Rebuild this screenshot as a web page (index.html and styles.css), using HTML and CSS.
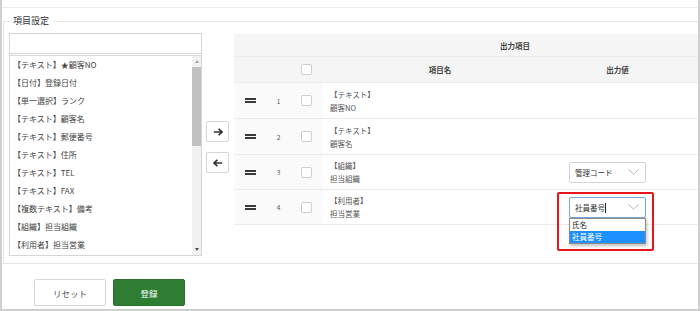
FILE: index.html
```html
<!DOCTYPE html>
<html lang="ja">
<head>
  <meta charset="UTF-8">
  <title>項目設定</title>
  <link rel="stylesheet" href="styles.css">
</head>
<body>
<div class="frame">
  <div class="topline"></div>

  <!-- 項目設定 -->
  <fieldset class="settings">
    <legend>項目設定</legend>
    <div class="panel">

      <!-- available fields -->
      <div class="picker">
        <input class="search" type="text">
        <div class="listbox">
          <ul class="items">
            <li>【テキスト】★顧客NO</li>
            <li>【日付】登録日付</li>
            <li>【単一選択】ランク</li>
            <li>【テキスト】顧客名</li>
            <li>【テキスト】郵便番号</li>
            <li>【テキスト】住所</li>
            <li>【テキスト】TEL</li>
            <li>【テキスト】FAX</li>
            <li>【複数テキスト】備考</li>
            <li>【組織】担当組織</li>
            <li>【利用者】担当営業</li>
          </ul>
          <div class="scrollbar">
            <span class="sb-btn"><span class="tri-up"></span></span>
            <span class="sb-thumb"></span>
            <span class="sb-track"></span>
            <span class="sb-btn"><span class="tri-down"></span></span>
          </div>
        </div>
      </div>

      <!-- move buttons -->
      <div class="moves">
        <button class="move" type="button">
          <svg width="10" height="8" viewBox="0 0 10 8"><path d="M0.8 4H9M5.6 0.8L9 4L5.6 7.2" fill="none" stroke="#333" stroke-width="1.7"/></svg>
        </button>
        <button class="move" type="button">
          <svg width="10" height="8" viewBox="0 0 10 8"><path d="M9.2 4H1M4.4 0.8L1 4L4.4 7.2" fill="none" stroke="#333" stroke-width="1.7"/></svg>
        </button>
      </div>

      <!-- selected fields -->
      <table class="output">
        <colgroup>
          <col class="c-handle">
          <col class="c-num">
          <col class="c-check">
          <col class="c-name">
          <col class="c-value">
          <col class="c-extra">
        </colgroup>
        <tr class="head-1">
          <th colspan="3"></th>
          <th colspan="3">出力項目</th>
        </tr>
        <tr class="head-2">
          <th></th>
          <th></th>
          <th><span class="check"></span></th>
          <th>項目名</th>
          <th>出力値</th>
          <th></th>
        </tr>
        <tr class="row tall">
          <td class="side"><span class="handle"></span></td>
          <td class="side num">1</td>
          <td class="side"><span class="check"></span></td>
          <td class="name">【テキスト】<br>顧客NO</td>
          <td class="value"></td>
          <td></td>
        </tr>
        <tr class="row tall">
          <td class="side"><span class="handle"></span></td>
          <td class="side num">2</td>
          <td class="side"><span class="check"></span></td>
          <td class="name">【テキスト】<br>顧客名</td>
          <td class="value"></td>
          <td></td>
        </tr>
        <tr class="row">
          <td class="side"><span class="handle"></span></td>
          <td class="side num">3</td>
          <td class="side"><span class="check"></span></td>
          <td class="name">【組織】<br>担当組織</td>
          <td class="value">
            <div class="select">
              <span>管理コード</span>
              <svg class="chev" width="11" height="6" viewBox="0 0 11 6"><path d="M0.5 0.5L5.5 5L10.5 0.5" fill="none" stroke="#b5b5b5" stroke-width="1"/></svg>
            </div>
          </td>
          <td></td>
        </tr>
        <tr class="row">
          <td class="side"><span class="handle"></span></td>
          <td class="side num">4</td>
          <td class="side"><span class="check"></span></td>
          <td class="name">【利用者】<br>担当営業</td>
          <td class="value">
            <div class="select focus">
              <span>社員番号<span class="caret"></span></span>
              <svg class="chev" width="11" height="6" viewBox="0 0 11 6"><path d="M0.5 0.5L5.5 5L10.5 0.5" fill="none" stroke="#b5b5b5" stroke-width="1"/></svg>
              <ul class="dropdown">
                <li>氏名</li>
                <li class="active">社員番号</li>
              </ul>
            </div>
            <div class="highlight"></div>
          </td>
          <td></td>
        </tr>
      </table>
    </div>
  </fieldset>

  <div class="actions">
    <button class="btn btn-reset" type="button">リセット</button>
    <button class="btn btn-submit" type="button">登録</button>
  </div>
</div>
</body>
</html>
```

FILE: styles.css
```css
html, body {
    margin: 0;
    padding: 0;
    background: #fff;
}
body {
    font-family: "Noto Sans CJK JP", "Noto Sans", sans-serif;
    color: #444;
}
.frame {
    width: 700px;
    height: 311px;
    box-sizing: border-box;
    padding-top: 7px;
    border-left: 2px solid #cfcfcf;
    border-right: 2px solid #cfcfcf;
    border-bottom: 2px solid #cfcfcf;
    overflow: hidden;
}
.topline {
    border-top: 1px solid #ececec;
}

/* fieldset */
.settings {
    margin: 6px -20px 0 1px;
    padding: 5px 0 7px 5px;
    border: 1px solid #e6e6e6;
    min-width: 0;
}
.settings legend {
    padding: 0 4px;
    font-size: 9px;
    line-height: 14px;
    color: #333;
}
.panel {
    display: flex;
    align-items: flex-start;
}

/* picker */
.picker {
    width: 193px;
    flex: none;
}
.search {
    display: block;
    width: 193px;
    height: 21px;
    box-sizing: border-box;
    margin: 0;
    border: 1px solid #d6d6d6;
    padding: 0;
}
.listbox {
    display: flex;
    height: 201px;
    margin-top: 1px;
    box-sizing: border-box;
    border: 1px solid #d6d6d6;
}
.items {
    flex: 1;
    list-style: none;
    margin: 0;
    padding: 0 0 0 3px;
    font-size: 8px;
    line-height: 18px;
    color: #444;
    white-space: nowrap;
    overflow: hidden;
}
.scrollbar {
    width: 9px;
    display: flex;
    flex-direction: column;
    background: #f1f1f1;
}
.sb-btn {
    height: 11px;
    display: flex;
    align-items: center;
    justify-content: center;
}
.tri-up, .tri-down {
    width: 0;
    height: 0;
    border-left: 2.5px solid transparent;
    border-right: 2.5px solid transparent;
}
.tri-up { border-bottom: 3px solid #a3a3a3; }
.tri-down { border-top: 3px solid #505050; }
.sb-thumb {
    height: 79px;
    background: #c1c1c1;
}
.sb-track { flex: 1; }

/* move buttons */
.moves {
    flex: none;
    width: 23px;
    margin-left: 4px;
    padding-top: 88px;
    display: flex;
    flex-direction: column;
    gap: 10px;
}
.move {
    width: 23px;
    height: 21px;
    margin: 0;
    padding: 0;
    background: #fff;
    border: 1px solid #d6d6d6;
    border-radius: 2px;
    display: flex;
    align-items: center;
    justify-content: center;
}

/* output table */
.output {
    flex: none;
    width: 473px;
    margin: 1px 0 0 5px;
    table-layout: fixed;
    border-collapse: separate;
    border-spacing: 0;
    font-size: 7.5px;
    color: #555;
}
.c-handle { width: 33px; }
.c-num { width: 23px; }
.c-check { width: 33px; }
.c-name { width: 234px; }
.c-value { width: 121px; }
.c-extra { width: 29px; }
.output th, .output td {
    box-sizing: border-box;
    padding: 0;
    border-bottom: 1px solid #ebebeb;
    vertical-align: middle;
}
.output th {
    background: #f5f5f5;
    font-weight: bold;
    color: #444;
    text-align: center;
}
.head-1 th { height: 23px; }
.head-2 th { height: 26px; }
.row td { height: 35px; }
.row.tall td { height: 36px; }
.side {
    background: #fafafa;
    text-align: center;
}
.num {
    font-size: 6.5px;
    color: #555;
}
.handle {
    display: block;
    width: 11px;
    height: 5px;
    margin: 0 auto;
    box-sizing: border-box;
    border-top: 2px solid #3a3a3a;
    border-bottom: 2px solid #3a3a3a;
}
.check {
    display: block;
    width: 11px;
    height: 11px;
    margin: 0 auto;
    box-sizing: border-box;
    background: #fff;
    border: 1px solid #cfcfcf;
    border-radius: 2px;
}
.name {
    padding-left: 7px !important;
    line-height: 13px;
}
.value {
    position: relative;
    padding-left: 12px !important;
}

/* select */
.select {
    position: relative;
    width: 77px;
    height: 21px;
    box-sizing: border-box;
    border: 1px solid #d3d3d3;
    border-radius: 2px;
    background: #fff;
    display: flex;
    align-items: center;
    justify-content: space-between;
    padding: 0 6px 0 5px;
    color: #333;
}
.select.focus {
    border-color: #78a9da;
}
.caret {
    display: inline-block;
    width: 1px;
    height: 10px;
    background: #222;
    vertical-align: -2px;
}
.dropdown {
    position: absolute;
    top: 20px;
    left: -1px;
    width: 77px;
    box-sizing: border-box;
    margin: 0;
    padding: 0;
    list-style: none;
    background: #fff;
    border: 1px solid #8c8c8c;
    box-shadow: 1px 2px 3px rgba(0,0,0,0.25);
    color: #222;
}
.dropdown li {
    height: 12px;
    line-height: 12px;
    padding-left: 2px;
}
.dropdown li.active {
    background: #1e90ff;
    color: #fff;
}
.highlight {
    position: absolute;
    left: 0;
    top: 2px;
    width: 97px;
    height: 59px;
    box-sizing: border-box;
    border: 2px solid #e8141c;
    border-radius: 2px;
}

/* buttons */
.actions {
    display: flex;
    gap: 7px;
    margin: 15px 0 0 32px;
}
.btn {
    width: 72px;
    height: 27px;
    margin: 0;
    font-family: inherit;
    font-size: 8.5px;
    border-radius: 2px;
}
.btn-reset {
    background: #fff;
    border: 1px solid #d6d6d6;
    color: #555;
}
.btn-submit {
    background: #2e7d32;
    border: 1px solid #2a6f2d;
    color: #fff;
}
```
